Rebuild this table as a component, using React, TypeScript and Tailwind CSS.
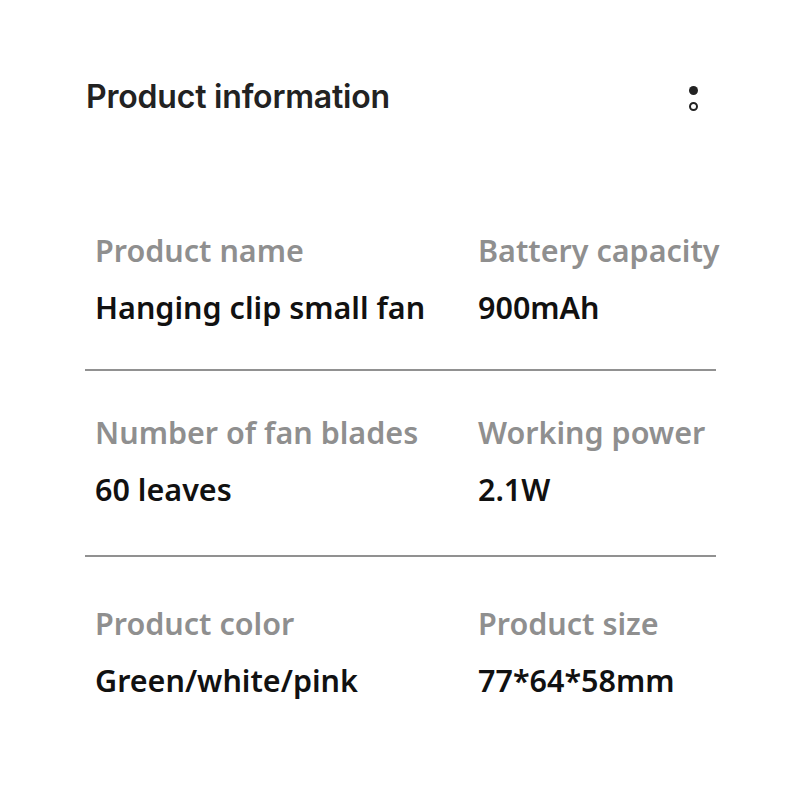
export default function App() {
  const rows = [
    [
      { label: 'Product name', value: 'Hanging clip small fan' },
      { label: 'Battery capacity', value: '900mAh' },
    ],
    [
      { label: 'Number of fan blades', value: '60 leaves' },
      { label: 'Working power', value: '2.1W' },
    ],
    [
      { label: 'Product color', value: 'Green/white/pink' },
      { label: 'Product size', value: '77*64*58mm' },
    ],
  ];

  const pad = ['pb-[42px]', 'pt-[41px] pb-[46px]', 'pt-[46px]'];

  return (
    <div className="w-[800px] h-[800px] bg-white overflow-hidden">
      <div className="flex items-start justify-between pl-[86px] pr-[102px] pt-[78px]">
        <h1 className="text-[32px] leading-[38px] font-semibold text-[#222] tracking-[-0.2px] [font-family:Inter,sans-serif]">
          Product information
        </h1>
        <div className="flex flex-col items-center gap-[7px] pt-[8px]">
          <span className="w-[9px] h-[9px] rounded-full bg-[#222]" />
          <span className="w-[9px] h-[9px] rounded-full border-2 border-[#222]" />
        </div>
      </div>

      <div className="mt-[114px] ml-[85px] w-[631px]">
        {rows.map((row, i) => (
          <div key={i}>
            {i > 0 && <div className="h-[2px] bg-[#919191]" />}
            <div className={`grid grid-cols-[383px_1fr] pl-[10px] ${pad[i]}`}>
              {row.map((c) => (
                <div key={c.label} className="whitespace-nowrap [font-family:'Noto_Sans',sans-serif]">
                  <div className="text-[30.5px] leading-[40px] font-semibold text-[#8f8f8f]">{c.label}</div>
                  <div className="mt-[17px] text-[30.5px] leading-[40px] font-semibold text-[#111]">{c.value}</div>
                </div>
              ))}
            </div>
          </div>
        ))}
      </div>
    </div>
  );
}
